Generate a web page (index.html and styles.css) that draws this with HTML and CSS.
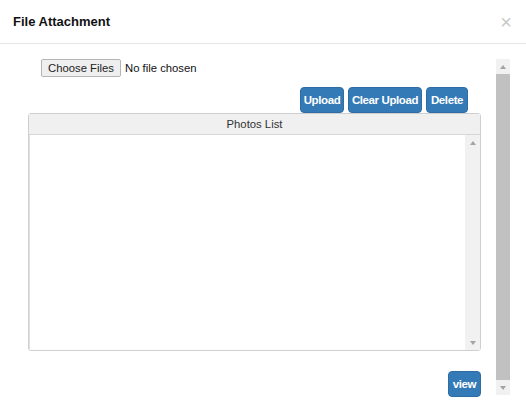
FILE: index.html
```html
<!DOCTYPE html>
<html>
<head>
<meta charset="utf-8">
<link rel="stylesheet" href="styles.css">
</head>
<body>
<div class="modal">
  <div class="modal-header">
    <h4 class="title">File Attachment</h4>
    <span class="close">&times;</span>
  </div>
  <div class="modal-body">
    <div class="content">
      <div class="file-row">
        <button class="file-btn">Choose Files</button>
        <span class="file-text">No file chosen</span>
      </div>
      <div class="actions">
        <button class="btn upload">Upload</button>
        <button class="btn clear">Clear Upload</button>
        <button class="btn delete">Delete</button>
      </div>
      <div class="panel">
        <div class="panel-head">Photos List</div>
        <div class="panel-body">
          <div class="list"></div>
          <div class="scroll inner">
            <div class="arrow up"></div>
            <div class="track"></div>
            <div class="arrow down"></div>
          </div>
        </div>
      </div>
      <div class="footer-row">
        <button class="btn view">view</button>
      </div>
    </div>
    <div class="scroll outer">
      <div class="arrow up"></div>
      <div class="thumb"></div>
      <div class="arrow down"></div>
    </div>
  </div>
</div>
</body>
</html>
```
FILE: styles.css
```css
html, body {
  margin: 0;
  padding: 0;
  background: #ffffff;
  font-family: "Liberation Sans", Arial, sans-serif;
  color: #333;
}
.modal {
  width: 526px;
  height: 401px;
  overflow: hidden;
}
.modal-header {
  height: 44px;
  box-sizing: border-box;
  border-bottom: 1px solid #e5e5e5;
  display: flex;
  align-items: center;
  justify-content: space-between;
  padding: 0 14px 0 13px;
}
.title {
  margin: 0;
  font-size: 13px;
  font-weight: bold;
  color: #111;
}
.close {
  font-size: 20px;
  color: #c8c8c8;
  line-height: 1;
  margin-top: 1px;
}
.modal-body {
  display: flex;
  padding-top: 15px;
}
.content {
  margin-left: 28px;
  width: 453px;
  display: flex;
  flex-direction: column;
}
.file-row {
  display: flex;
  align-items: center;
  padding-left: 13px;
  height: 18px;
}
.file-btn {
  font-family: "Liberation Sans", Arial, sans-serif;
  font-size: 11.3px;
  height: 18px;
  width: 80px;
  padding: 0;
  background: #efefef;
  border: 1px solid #b5b5b5;
  border-radius: 2px;
  color: #222;
}
.file-text {
  font-size: 11.3px;
  color: #111;
  margin-left: 4px;
}
.actions {
  display: flex;
  justify-content: flex-end;
  gap: 4px;
  margin-top: 10px;
  margin-right: 13px;
}
.btn {
  font-family: "Liberation Sans", Arial, sans-serif;
  font-size: 11.5px;
  font-weight: bold;
  color: #fff;
  background: #337ab7;
  border: 1px solid #2e6da4;
  border-radius: 4px;
  height: 26px;
  padding: 0;
  letter-spacing: -0.4px;
}
.btn.upload { width: 44px; }
.btn.clear { width: 74px; }
.btn.delete { width: 42px; }
.panel {
  height: 238px;
  box-sizing: border-box;
  border: 1px solid #cfcfcf;
  border-radius: 3px;
  display: flex;
  flex-direction: column;
}
.panel-head {
  height: 21px;
  box-sizing: border-box;
  background: #f0f0f0;
  border-bottom: 1px solid #d6d6d6;
  text-align: center;
  font-size: 11.3px;
  line-height: 20px;
  color: #333;
}
.panel-body {
  flex: 1;
  display: flex;
  border-left: 1px solid #e2e2e2;
}
.list {
  flex: 1;
}
.scroll {
  display: flex;
  flex-direction: column;
  background: #f1f1f1;
}
.scroll.inner {
  width: 15px;
}
.scroll .arrow {
  height: 15px;
  position: relative;
}
.scroll .arrow::after {
  content: "";
  position: absolute;
  left: 50%;
  top: 50%;
  margin-left: -3px;
  margin-top: -2px;
  border-left: 3px solid transparent;
  border-right: 3px solid transparent;
}
.scroll .arrow.up::after {
  border-bottom: 4px solid #a3a3a3;
}
.scroll .arrow.down::after {
  border-top: 4px solid #a3a3a3;
}
.scroll .track {
  flex: 1;
}
.footer-row {
  display: flex;
  justify-content: flex-end;
  margin-top: 20px;
}
.btn.view {
  width: 33px;
  height: 26px;
}
.scroll.outer {
  width: 14px;
  height: 336px;
  margin-left: 15px;
}
.scroll.outer .thumb {
  flex: 1;
  background: #c1c1c1;
}
```
